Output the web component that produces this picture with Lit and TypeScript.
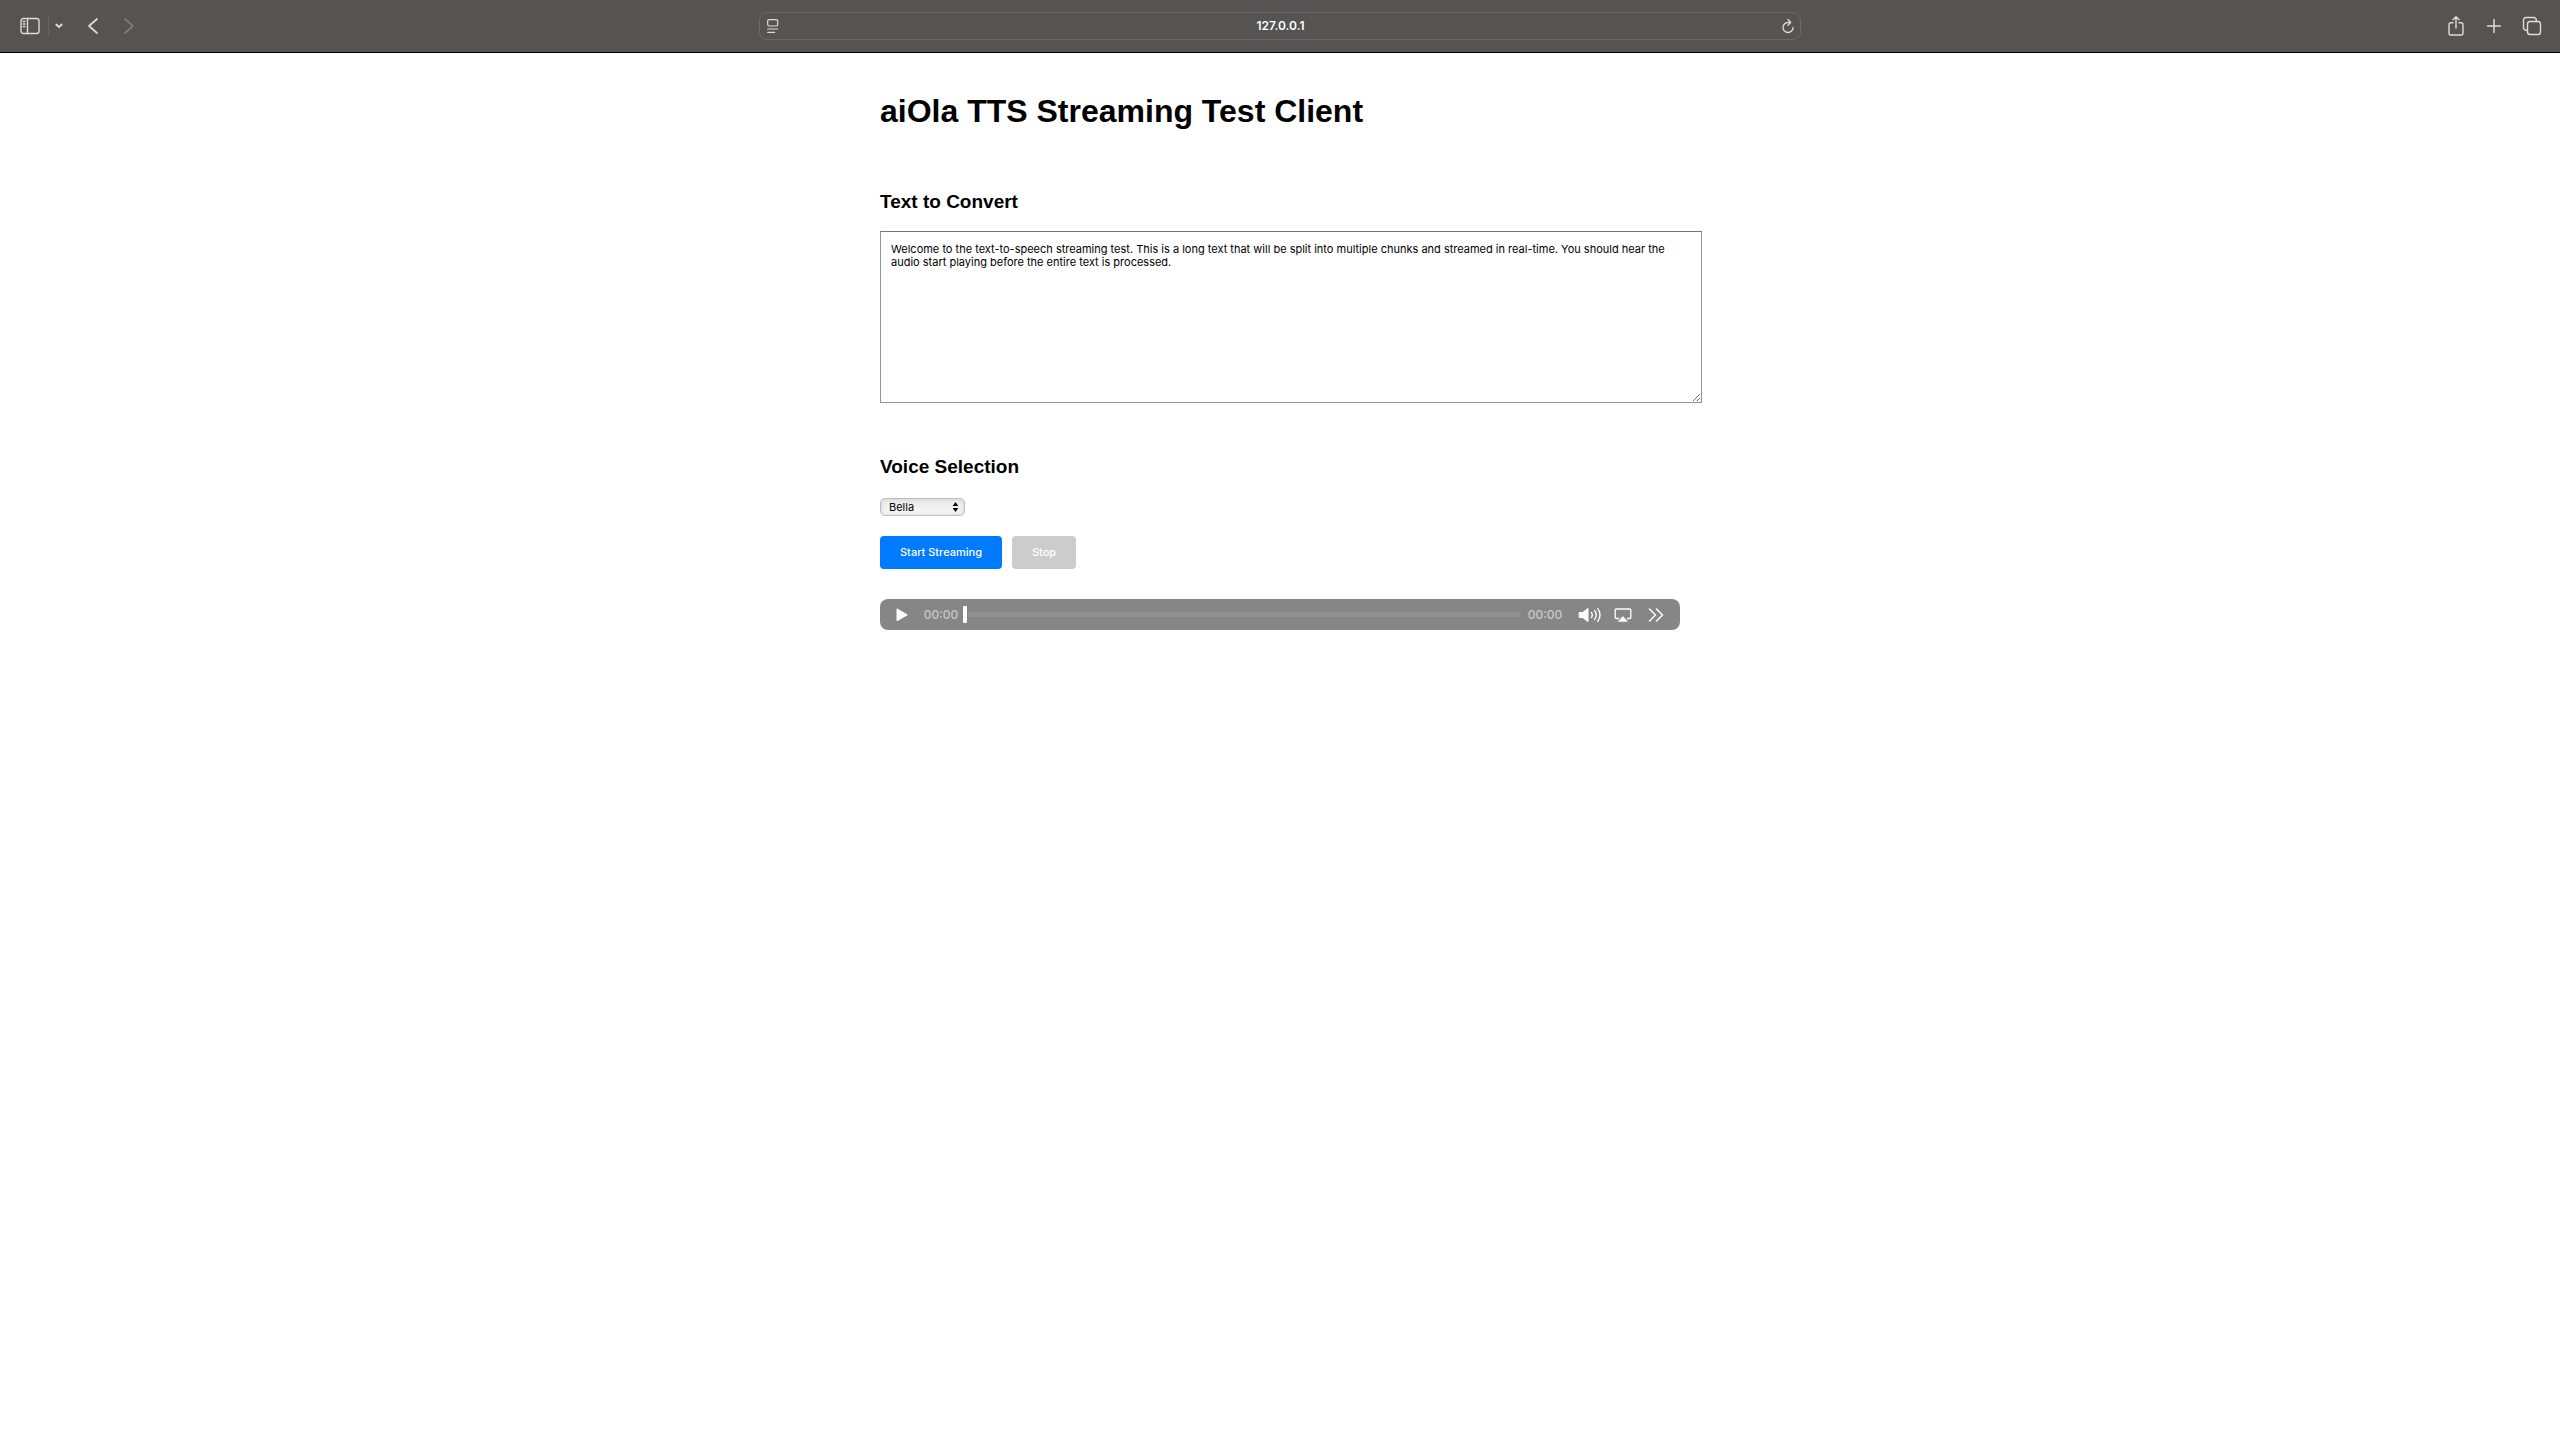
import { LitElement, html, css } from "lit";
import { customElement, property, state } from "lit/decorators.js";

const uiFont = css`Inter, "Liberation Sans", sans-serif`;

@customElement("browser-toolbar")
class BrowserToolbar extends LitElement {
  @property() address = "";

  static styles = css`
    :host {
      display: block;
      font-family: ${uiFont};
    }
    .bar {
      display: grid;
      grid-template-columns: 1fr minmax(0, 1042px) 1fr;
      align-items: center;
      box-sizing: border-box;
      height: 53px;
      padding: 0 16px;
      background: #555452;
      border-bottom: 1px solid #000;
    }
    .group {
      display: flex;
      align-items: center;
      height: 52px;
    }
    .start {
      padding-left: 2px;
    }
    .end {
      justify-content: flex-end;
      gap: 14px;
    }
    button {
      display: flex;
      align-items: center;
      justify-content: center;
      width: 24px;
      height: 28px;
      margin: 0;
      padding: 0;
      border: 0;
      background: none;
      color: #dddcda;
    }
    button:disabled {
      color: #7d7b79;
    }
    .more {
      width: 20px;
    }
    .divider {
      width: 1px;
      height: 18px;
      margin: 0 0 0 6px;
      background: #666563;
    }
    .back {
      margin: 0 12px 0 12px;
    }
    svg {
      display: block;
      fill: none;
      stroke: currentColor;
      stroke-linecap: round;
      stroke-linejoin: round;
    }
    .address {
      display: flex;
      align-items: center;
      box-sizing: border-box;
      height: 28px;
      padding: 0 0 0 1px;
      border: 1px solid #6a6967;
      border-radius: 8px;
    }
    .address input {
      flex: 1;
      min-width: 0;
      height: 20px;
      padding: 0;
      border: 0;
      outline: 0;
      background: none;
      color: #fff;
      font: 600 12px/20px ${uiFont};
      text-align: center;
    }
  `;

  render() {
    return html`
      <header class="bar">
        <nav class="group start">
          <button aria-label="Show sidebar">
            <svg width="20" height="18" viewBox="0 0 20 18" stroke-width="1.4">
              <rect x="1" y="1.5" width="18" height="15" rx="2.5" />
              <path d="M7.5 1.5v15M3.3 4.5h1.6M3.3 7h1.6M3.3 9.5h1.6" />
            </svg>
          </button>
          <span class="divider"></span>
          <button class="more" aria-label="Tab groups">
            <svg width="8" height="6" viewBox="0 0 8 6" stroke-width="1.8">
              <path d="M1.3 1.5L4 4l2.7-2.5" />
            </svg>
          </button>
          <button class="back" aria-label="Back">
            <svg width="12" height="18" viewBox="0 0 12 18" stroke-width="1.7">
              <path d="M10 2L2 9l8 7" />
            </svg>
          </button>
          <button aria-label="Forward" disabled>
            <svg width="12" height="18" viewBox="0 0 12 18" stroke-width="1.7">
              <path d="M2 2l8 7-8 7" />
            </svg>
          </button>
        </nav>
        <div class="address">
          <button aria-label="Page menu">
            <svg width="12" height="16" viewBox="0 0 12 16" stroke-width="1.2">
              <rect x="0.7" y="1.6" width="10" height="6.4" rx="1.5" />
              <path d="M0.7 11h10M0.7 14.3h7" />
            </svg>
          </button>
          <input type="text" aria-label="Address" .value=${this.address} />
          <button aria-label="Reload">
            <svg width="12" height="16" viewBox="0 0 12 16" stroke-width="1.3">
              <path d="M11 9.5A5 5 0 1 1 6 4.5H7.5" />
              <path d="M6 1.5L8.8 4.4L6 7.3" />
            </svg>
          </button>
        </div>
        <div class="group end">
          <button aria-label="Share">
            <svg width="16" height="22" viewBox="0 0 16 22" stroke-width="1.4">
              <path d="M5 7.7H2.8A1.8 1.8 0 0 0 1 9.5v8.7A1.8 1.8 0 0 0 2.8 20h10.4a1.8 1.8 0 0 0 1.8-1.8V9.5a1.8 1.8 0 0 0-1.8-1.8H11M8 13V2M5 4.8L8 1.8l3 3" />
            </svg>
          </button>
          <button aria-label="New tab">
            <svg width="16" height="16" viewBox="0 0 16 16" stroke-width="1.5">
              <path d="M8 1.5v13M1.5 8h13" />
            </svg>
          </button>
          <button aria-label="Tab overview">
            <svg width="20" height="20" viewBox="0 0 20 20" stroke-width="1.4">
              <rect x="5.5" y="5.5" width="13" height="13" rx="2.5" />
              <path d="M5.5 14.3H4A2.5 2.5 0 0 1 1.5 11.8V4A2.5 2.5 0 0 1 4 1.5h7.8A2.5 2.5 0 0 1 14.3 4v1.5" />
            </svg>
          </button>
        </div>
      </header>
    `;
  }
}

@customElement("audio-player")
class AudioPlayer extends LitElement {
  @property() elapsed = "00:00";
  @property() remaining = "00:00";

  static styles = css`
    :host {
      display: block;
    }
    .player {
      display: flex;
      align-items: center;
      box-sizing: border-box;
      height: 31px;
      padding: 0 12px;
      border-radius: 8px;
      background: #868686;
      color: #c8c8c8;
      font: 500 12px/16px ${uiFont};
    }
    button {
      display: flex;
      align-items: center;
      justify-content: center;
      width: 24px;
      height: 24px;
      padding: 0;
      border: 0;
      background: none;
      color: #fff;
    }
    svg {
      display: block;
      fill: none;
      stroke: currentColor;
      stroke-linecap: round;
      stroke-linejoin: round;
    }
    .solid {
      fill: currentColor;
    }
    .time {
      width: 36px;
      text-align: center;
    }
    .play {
      width: 20px;
      margin-right: 11px;
    }
    .seek {
      flex: 1;
      min-width: 0;
      height: 18px;
      margin: 0 6px 0 4px;
      appearance: none;
      background: none;
    }
    .seek::-webkit-slider-runnable-track {
      height: 5px;
      border-radius: 3px;
      background: #919191;
    }
    .seek::-webkit-slider-thumb {
      appearance: none;
      width: 4px;
      height: 17px;
      margin-top: -6px;
      border-radius: 1px;
      background: #fff;
      box-shadow: 0 0 0 1px #868686;
    }
    .tools {
      display: flex;
      gap: 9px;
      margin-left: 15px;
    }
  `;

  render() {
    return html`
      <div class="player" role="group" aria-label="Audio player">
        <button class="play" aria-label="Play">
          <svg width="12" height="14" viewBox="0 0 12 14">
            <path class="solid" d="M1 1.2v11.6L11 7z" />
          </svg>
        </button>
        <span class="time">${this.elapsed}</span>
        <input class="seek" type="range" min="0" max="100" .value=${"0"} aria-label="Seek" />
        <span class="time">${this.remaining}</span>
        <div class="tools">
          <button aria-label="Mute">
            <svg width="24" height="16" viewBox="0 0 24 16" stroke-width="1.4">
              <path class="solid" stroke-width="1" d="M1.5 5.5h3.2L10 1.3v13.4l-5.3-4.2H1.5z" />
              <path d="M13.5 5.6q1.6 2.4 0 4.8M16.7 3.6q3 4.4 0 8.8M19.8 1.6q4.4 6.4 0 12.8" />
            </svg>
          </button>
          <button aria-label="AirPlay">
            <svg width="18" height="14" viewBox="0 0 18 14" stroke-width="1.3">
              <path d="M4.5 10.5H2.2A1 1 0 0 1 1.2 9.5V2a1 1 0 0 1 1-1h13.6a1 1 0 0 1 1 1v7.5a1 1 0 0 1-1 1H13.5" />
              <path class="solid" stroke-width="0.8" d="M9 8.7l4.3 4.6H4.7z" />
            </svg>
          </button>
          <button aria-label="More controls">
            <svg width="16" height="14" viewBox="0 0 16 14" stroke-width="1.5">
              <path d="M1.5 1l6 6-6 6M8.5 1l6 6-6 6" />
            </svg>
          </button>
        </div>
      </div>
    `;
  }
}

@customElement("app-root")
class AppRoot extends LitElement {
  @state() private streaming = false;
  @state() private text =
    "Welcome to the text-to-speech streaming test. This is a long text that will be split into multiple chunks and streamed in real-time. You should hear the audio start playing before the entire text is processed.";

  static styles = css`
    :host {
      display: block;
      min-height: 100vh;
      background: #fff;
      color: #000;
      font-family: "Liberation Sans", Arial, sans-serif;
    }
    main {
      max-width: 800px;
      margin: 0 auto;
      padding: 40px 20px;
    }
    h1 {
      margin: 0;
      padding-bottom: 8px;
      font-size: 32px;
      line-height: 37px;
    }
    h2 {
      margin: 0 0 19px;
      font-size: 19px;
      line-height: 21px;
    }
    section {
      margin-top: 53px;
    }
    label {
      display: block;
    }
    textarea {
      display: block;
      width: 100%;
      height: 150px;
      padding: 11px 10px 9px;
      border: 1px solid #949494;
      border-top-color: #767676;
      border-radius: 0;
      outline: 0;
      background: #fff;
      color: #000;
      font: 11px/13px ${uiFont};
      resize: both;
    }
    .picker {
      display: grid;
      width: 85px;
      padding-top: 2px;
    }
    .picker select,
    .picker svg {
      grid-area: 1 / 1;
    }
    .picker svg {
      place-self: center end;
      margin-right: 6px;
      pointer-events: none;
    }
    select {
      appearance: none;
      width: 85px;
      height: 18px;
      padding: 0 8px;
      border: 1px solid #bdbdbd;
      border-radius: 5px;
      background: linear-gradient(#e9e9e9, #f8f8f8);
      box-shadow: inset 0 0 4px #d0d0d0;
      color: #000;
      font: 11px/14px ${uiFont};
    }
    .actions {
      display: flex;
      gap: 10px;
      margin: 20px 0 30px;
    }
    .actions button {
      padding: 10px 20px;
      border: 0;
      border-radius: 4px;
      background: #007bff;
      color: #fff;
      font: 500 11px/13px ${uiFont};
    }
    .actions button:disabled {
      background: #ccc;
    }
  `;

  render() {
    return html`
      <browser-toolbar address="127.0.0.1"></browser-toolbar>
      <main>
        <h1>aiOla TTS Streaming Test Client</h1>
        <section>
          <h2><label for="text">Text to Convert</label></h2>
          <textarea
            id="text"
            spellcheck="false"
            .value=${this.text}
            @input=${(e: Event) => (this.text = (e.target as HTMLTextAreaElement).value)}
          ></textarea>
        </section>
        <section>
          <h2><label for="voice">Voice Selection</label></h2>
          <div class="picker">
            <select id="voice">
              <option>Bella</option>
            </select>
            <svg width="7" height="10" viewBox="0 0 7 10" aria-hidden="true">
              <path d="M3.5 0L6.3 4H0.7zM3.5 10L0.7 6h5.6z" />
            </svg>
          </div>
          <div class="actions">
            <button ?disabled=${this.streaming} @click=${() => (this.streaming = true)}>Start Streaming</button>
            <button ?disabled=${!this.streaming} @click=${() => (this.streaming = false)}>Stop</button>
          </div>
          <audio-player></audio-player>
        </section>
      </main>
    `;
  }
}
